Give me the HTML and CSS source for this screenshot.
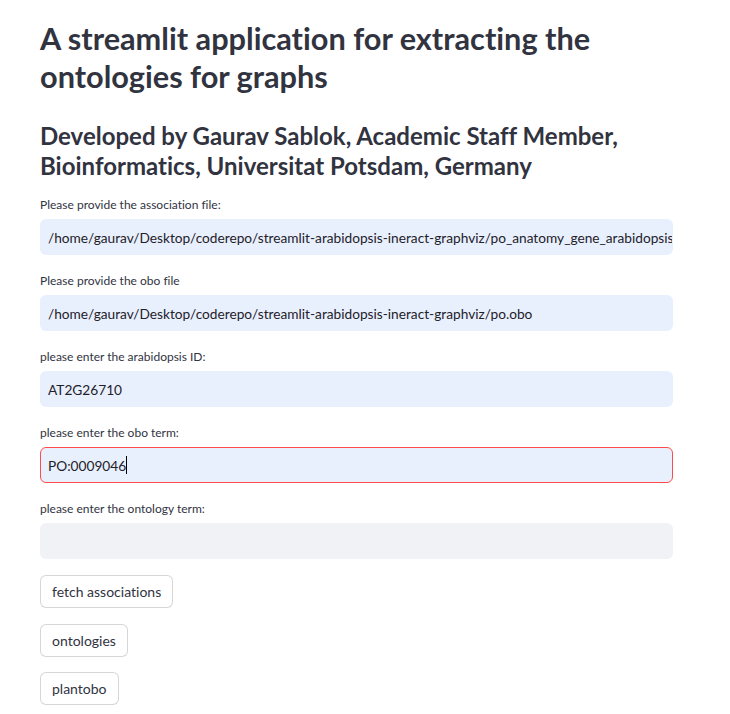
FILE: index.html
```html
<!DOCTYPE html>
<html>
<head>
<meta charset="utf-8">
<link rel="stylesheet" href="styles.css">
</head>
<body>
<main class="main">
  <h1 class="title">A streamlit application for extracting the ontologies for graphs</h1>
  <h2 class="subtitle">Developed by Gaurav Sablok, Academic Staff Member, Bioinformatics, Universitat Potsdam, Germany</h2>
  <div class="fields">
    <div class="field">
      <label class="label">Please provide the association file:</label>
      <div class="input filled"><span class="value">/home/gaurav/Desktop/coderepo/streamlit-arabidopsis-ineract-graphviz/po_anatomy_gene_arabidopsis_tair.assoc</span></div>
    </div>
    <div class="field">
      <label class="label">Please provide the obo file</label>
      <div class="input filled"><span class="value">/home/gaurav/Desktop/coderepo/streamlit-arabidopsis-ineract-graphviz/po.obo</span></div>
    </div>
    <div class="field">
      <label class="label">please enter the arabidopsis ID:</label>
      <div class="input filled"><span class="value">AT2G26710</span></div>
    </div>
    <div class="field">
      <label class="label">please enter the obo term:</label>
      <div class="input filled focused"><span class="value">PO:0009046</span><span class="caret"></span></div>
    </div>
    <div class="field">
      <label class="label">please enter the ontology term:</label>
      <div class="input empty"></div>
    </div>
  </div>
  <div class="buttons">
    <button class="btn">fetch associations</button>
    <button class="btn">ontologies</button>
    <button class="btn">plantobo</button>
  </div>
</main>
</body>
</html>
```
FILE: styles.css
```css
html, body {
  margin: 0;
  padding: 0;
  background: #ffffff;
}
body {
  font-family: Lato, "Open Sans", sans-serif;
  color: #31333f;
  font-variant-ligatures: none;
}
.main {
  width: 633px;
  padding: 20px 0 0 40px;
}
.title {
  margin: 0;
  font-size: 30.7px;
  line-height: 38px;
  font-weight: 700;
  color: #31333f;
}
.subtitle {
  margin: 25px 0 0 0;
  font-size: 24px;
  line-height: 30px;
  font-weight: 700;
  color: #31333f;
}
.fields {
  margin-top: 16px;
  display: flex;
  flex-direction: column;
  gap: 18px;
}
.field {
  display: flex;
  flex-direction: column;
  gap: 7px;
}
.label {
  font-size: 12px;
  line-height: 15px;
  color: #31333f;
}
.input {
  height: 36px;
  box-sizing: border-box;
  border-radius: 6px;
  border: 1px solid transparent;
  display: flex;
  align-items: center;
  padding: 0 7px;
  overflow: hidden;
  white-space: nowrap;
}
.filled {
  background: #e8f0fe;
}
.empty {
  background: #f0f2f6;
}
.focused {
  border-color: #ff4b4b;
}
.value {
  font-family: Lato, "Open Sans", sans-serif;
  font-size: 13.7px;
  color: #1f2129;
}
.caret {
  display: inline-block;
  width: 1px;
  height: 18px;
  background: #000;
}
.buttons {
  margin-top: 16px;
  display: flex;
  flex-direction: column;
  align-items: flex-start;
  gap: 15.5px;
}
.btn {
  font-family: Lato, "Open Sans", sans-serif;
  font-variant-ligatures: none;
  font-size: 14px;
  color: #31333f;
  background: #ffffff;
  border: 1px solid rgba(49, 51, 63, 0.2);
  border-radius: 6px;
  height: 33px;
  padding: 0 11px;
}
```
